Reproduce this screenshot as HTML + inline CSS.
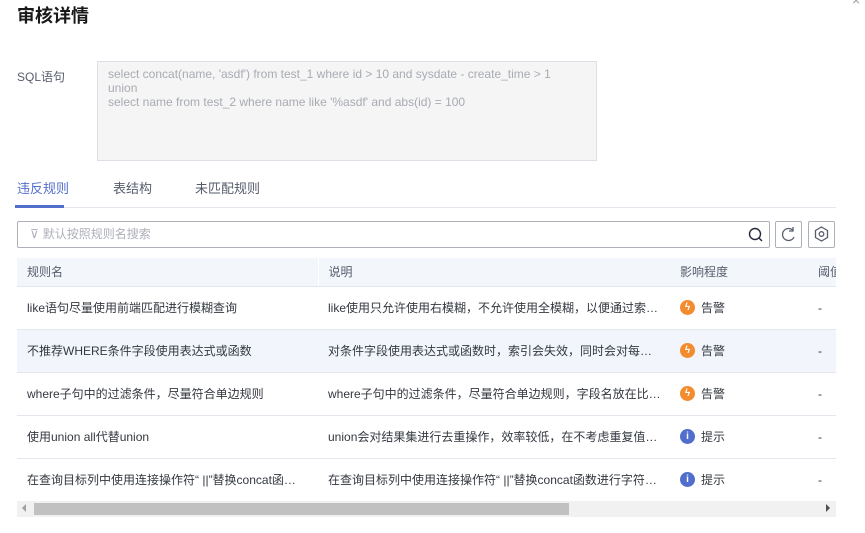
<!DOCTYPE html>
<html><head><meta charset="utf-8"><style>
*{box-sizing:border-box;margin:0;padding:0}
body{width:865px;height:533px;background:#fff;font-family:"Liberation Sans","Noto Sans CJK SC",sans-serif;color:#252b3a;position:relative;overflow:hidden;font-size:12px}
.abs{position:absolute}
h1{position:absolute;left:17px;top:2px;font-size:18px;font-weight:bold;color:#191919}
.sqlbox{left:97px;top:61px;width:500px;height:100px;background:#f5f5f6;border:1px solid #dcdfe6;padding:5px 10px;color:#a8abb2;font-size:12px;line-height:14px}
.tabs span{position:absolute;top:178px;font-size:13px;color:#575d6c}
.tabline{left:17px;top:207px;width:819px;height:1px;background:#e4e7ed}
.search{left:17px;top:221px;width:753px;height:27px;border:1px solid #adb0b8;border-radius:2px;color:#adb0b8;padding:0 0 0 12px;line-height:25px;font-size:12px}
.btn{top:221px;width:27px;height:27px;border:1px solid #adb0b8;border-radius:2px}
table{position:absolute;left:17px;top:258px;width:819px;border-collapse:collapse;table-layout:fixed}
th{background:#f3f6fb;height:28px;text-align:left;font-weight:normal;color:#575d6c;padding:0 0 0 10px;font-size:12px;border-bottom:1px solid #e4e7ed;white-space:nowrap;overflow:hidden;line-height:14px}
td{height:43px;border-bottom:1px solid #e4e7ed;padding:0 0 0 10px;font-size:12px;white-space:nowrap;overflow:hidden;color:#33383f;line-height:14px;vertical-align:middle}
tr.hl td{background:#f2f5fc}
.ic{display:inline-block;width:15px;height:15px;border-radius:50%;vertical-align:middle;margin-right:6px;color:#fff;font-size:10px;text-align:center;line-height:15px;font-weight:bold}
.lv{display:inline-block;vertical-align:middle}
.w{background:#f28c2e}.i{background:#526ecc}
</style></head><body>
<h1>审核详情</h1>
<div class="abs" style="left:852px;top:-8px;color:#999;font-size:14px">×</div>
<div class="abs" style="left:17px;top:68px;font-size:12px;color:#575d6c">SQL语句</div>
<div class="abs sqlbox">select concat(name, 'asdf') from test_1 where id &gt; 10 and sysdate - create_time &gt; 1<br>union<br>select name from test_2 where name like '%asdf' and abs(id) = 100</div>
<div class="tabs"><span style="left:17px;color:#526ecc">违反规则</span><span style="left:113px">表结构</span><span style="left:195px">未匹配规则</span></div>
<div class="abs tabline"></div>
<div class="abs" style="left:15px;top:205px;width:49px;height:3px;background:#526ecc"></div>
<div class="abs search"><span style="margin-right:4px">⊽</span>默认按照规则名搜索</div>
<svg class="abs" style="left:747px;top:226px" width="18" height="18" viewBox="0 0 18 18"><circle cx="8" cy="8" r="5.5" fill="none" stroke="#252b3a" stroke-width="1.4"/><line x1="12" y1="12" x2="15" y2="15" stroke="#252b3a" stroke-width="1.4"/></svg>
<div class="abs btn" style="left:775px"><svg width="25" height="25" viewBox="0 0 25 25"><path d="M17 8.5A6 6 0 1 0 18 15" fill="none" stroke="#575d6c" stroke-width="1.3"/><path d="M17 5v4h-4" fill="none" stroke="#575d6c" stroke-width="1.3"/></svg></div>
<div class="abs btn" style="left:808px"><svg width="25" height="25" viewBox="0 0 25 25"><path d="M12.5 5l6 3.5v7l-6 3.5-6-3.5v-7z" fill="none" stroke="#575d6c" stroke-width="1.3"/><circle cx="12.5" cy="12" r="2.3" fill="none" stroke="#575d6c" stroke-width="1.3"/></svg></div>
<table>
<colgroup><col style="width:301px"><col style="width:352px"><col style="width:138px"><col style="width:28px"></colgroup>
<tr><th style="border-right:1px solid #fff">规则名</th><th>说明</th><th>影响程度</th><th>阈值</th></tr>
<tr><td>like语句尽量使用前端匹配进行模糊查询</td><td>like使用只允许使用右模糊，不允许使用全模糊，以便通过索…</td><td><span class="ic w">ϟ</span><span class="lv">告警</span></td><td>-</td></tr>
<tr class="hl"><td>不推荐WHERE条件字段使用表达式或函数</td><td>对条件字段使用表达式或函数时，索引会失效，同时会对每…</td><td><span class="ic w">ϟ</span><span class="lv">告警</span></td><td>-</td></tr>
<tr><td>where子句中的过滤条件，尽量符合单边规则</td><td>where子句中的过滤条件，尽量符合单边规则，字段名放在比…</td><td><span class="ic w">ϟ</span><span class="lv">告警</span></td><td>-</td></tr>
<tr><td>使用union all代替union</td><td>union会对结果集进行去重操作，效率较低，在不考虑重复值…</td><td><span class="ic i">i</span><span class="lv">提示</span></td><td>-</td></tr>
<tr><td>在查询目标列中使用连接操作符“ ||”替换concat函…</td><td>在查询目标列中使用连接操作符“ ||”替换concat函数进行字符…</td><td><span class="ic i">i</span><span class="lv">提示</span></td><td>-</td></tr>
</table>
<div class="abs" style="left:17px;top:501px;width:819px;height:16px;background:#f1f1f1"></div>
<div class="abs" style="left:34px;top:503px;width:535px;height:12px;background:#c1c1c1"></div>
<div class="abs" style="left:22px;top:504px;width:0;height:0;border-top:4px solid transparent;border-bottom:4px solid transparent;border-right:4px solid #a0a0a0"></div>
<div class="abs" style="left:826px;top:504px;width:0;height:0;border-top:4px solid transparent;border-bottom:4px solid transparent;border-left:4px solid #505050"></div>
</body></html>
